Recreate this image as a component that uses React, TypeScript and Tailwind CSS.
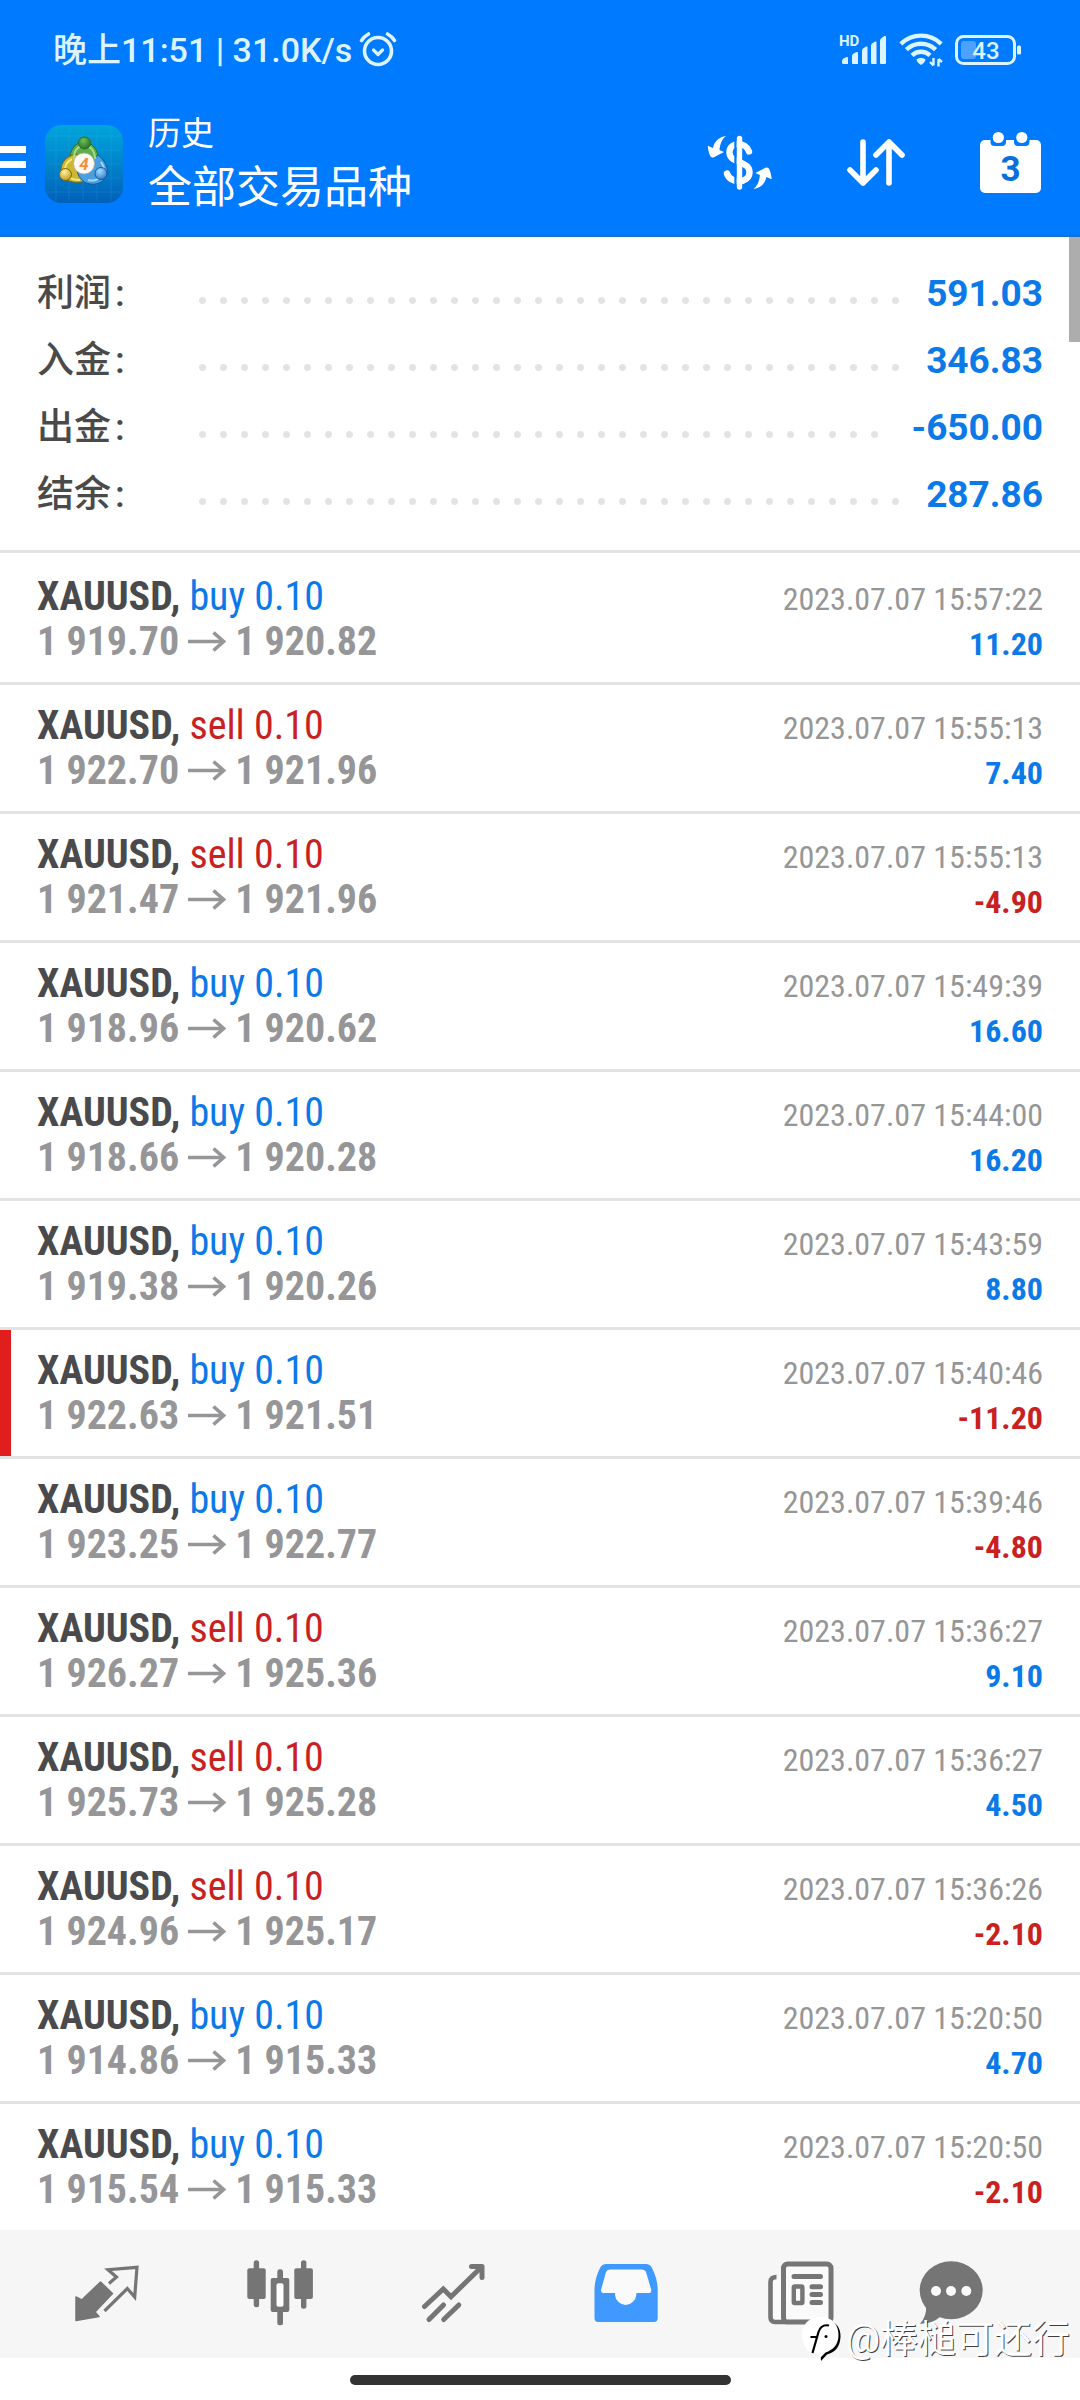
import type { ReactNode } from "react";

type Deal = {
  side: "buy" | "sell";
  open: string;
  close: string;
  time: string;
  profit: string;
  flagged?: boolean;
};

const summary = [
  { label: "利润", value: "591.03" },
  { label: "入金", value: "346.83" },
  { label: "出金", value: "-650.00" },
  { label: "结余", value: "287.86" },
];

const deals: Deal[] = [
  { side: "buy", open: "1 919.70", close: "1 920.82", time: "2023.07.07 15:57:22", profit: "11.20" },
  { side: "sell", open: "1 922.70", close: "1 921.96", time: "2023.07.07 15:55:13", profit: "7.40" },
  { side: "sell", open: "1 921.47", close: "1 921.96", time: "2023.07.07 15:55:13", profit: "-4.90" },
  { side: "buy", open: "1 918.96", close: "1 920.62", time: "2023.07.07 15:49:39", profit: "16.60" },
  { side: "buy", open: "1 918.66", close: "1 920.28", time: "2023.07.07 15:44:00", profit: "16.20" },
  { side: "buy", open: "1 919.38", close: "1 920.26", time: "2023.07.07 15:43:59", profit: "8.80" },
  { side: "buy", open: "1 922.63", close: "1 921.51", time: "2023.07.07 15:40:46", profit: "-11.20", flagged: true },
  { side: "buy", open: "1 923.25", close: "1 922.77", time: "2023.07.07 15:39:46", profit: "-4.80" },
  { side: "sell", open: "1 926.27", close: "1 925.36", time: "2023.07.07 15:36:27", profit: "9.10" },
  { side: "sell", open: "1 925.73", close: "1 925.28", time: "2023.07.07 15:36:27", profit: "4.50" },
  { side: "sell", open: "1 924.96", close: "1 925.17", time: "2023.07.07 15:36:26", profit: "-2.10" },
  { side: "buy", open: "1 914.86", close: "1 915.33", time: "2023.07.07 15:20:50", profit: "4.70" },
  { side: "buy", open: "1 915.54", close: "1 915.33", time: "2023.07.07 15:20:50", profit: "-2.10" },
];

function AlarmIcon() {
  return (
    <svg width="40" height="38" viewBox="0 0 40 38" fill="none" stroke="currentColor" strokeLinecap="round" strokeLinejoin="round" aria-hidden="true">
      <circle cx="20" cy="20" r="13.5" strokeWidth="3.6" />
      <path d="M15.5 19 L20 23.5 L24.5 19" strokeWidth="3.2" />
      <path d="M3.5 9.5 Q6 5.500 10.5 3" strokeWidth="3.6" />
      <path d="M36.5 9.5 Q34 5.500 29.5 3" strokeWidth="3.6" />
    </svg>
  );
}

function SignalIcon() {
  return (
    <svg width="50" height="42" viewBox="0 -4 50 42" fill="currentColor" aria-label="HD" role="img">
      <text x="1" y="13" className="font-[family-name:Roboto,sans-serif] text-[15px] font-bold">HD</text>
      <path d="M4 28 Q4 26.5 5.5 25.5 L8.5 24 Q10 23.5 10 25 V31 H5.5 Q4 31 4 29.5Z" />
      <path d="M14 23 Q14 21.5 15.5 20.5 L18.5 19 Q20 18.5 20 20 V31 H15 Q14 31 14 30Z" />
      <path d="M24 18 Q24 16.5 25 15.5 L28 13.5 Q29.5 13 29.5 14.5 V31 H25 Q24 31 24 30Z" />
      <path d="M33 13 Q33 11.5 34 10.5 L37 8.5 Q38.5 8 38.5 9.5 V31 H34 Q33 31 33 30Z" />
      <path d="M42 8 Q42 6 43.5 5 L46.5 3 Q48 2.5 48 4 V30 Q48 31 47 31 H43 Q42 31 42 30Z" />
    </svg>
  );
}

function WifiIcon() {
  return (
    <svg width="46" height="38" viewBox="0 0 46 38" fill="none" stroke="currentColor" aria-hidden="true">
      <g strokeWidth="4.4">
        <path d="M2.8 12.8 A29 29 0 0 1 43.2 12.8" />
        <path d="M8.4 18.6 A21 21 0 0 1 37.6 18.6" />
        <path d="M14 24.4 A13 13 0 0 1 32 24.4" />
      </g>
      <path d="M18.5 28.5 Q23 25 27.5 28.5 Q27 31.5 23 34 Q19 31.5 18.5 28.5Z" fill="currentColor" stroke="none" />
      <path d="M35.5 27 V34.5 M35.5 34.5 L32 31 M40.5 35.5 V28 M40.5 28 L44 31" strokeWidth="2.4" />
    </svg>
  );
}

function BatteryIcon() {
  return (
    <svg width="70" height="32" viewBox="0 0 70 32" fill="none" aria-label="43%" role="img">
      <rect x="2.5" y="2.5" width="58" height="27" rx="7" stroke="currentColor" strokeWidth="3" />
      <rect x="7" y="7" width="15" height="18" rx="3" fill="#4da2ff" />
      <rect x="63" y="11.5" width="4" height="9" rx="1.5" fill="currentColor" />
      <text x="32" y="24.5" textAnchor="middle" fill="currentColor" className="font-[family-name:Roboto,sans-serif] text-[24px] font-medium">43</text>
    </svg>
  );
}

function AppLogo() {
  return (
    <svg width="78" height="78" viewBox="0 0 78 78" aria-hidden="true" className="shrink-0">
      <defs>
        <linearGradient id="tile" x1="0" y1="0" x2="0" y2="1">
          <stop offset="0" stopColor="#00a5dc" />
          <stop offset="0.5" stopColor="#0084cc" />
          <stop offset="1" stopColor="#0060b8" />
        </linearGradient>
        <radialGradient id="green" cx="0.4" cy="0.3" r="0.8">
          <stop offset="0" stopColor="#6fc052" />
          <stop offset="1" stopColor="#1f6a24" />
        </radialGradient>
        <radialGradient id="yellow" cx="0.4" cy="0.3" r="0.8">
          <stop offset="0" stopColor="#fff3a0" />
          <stop offset="1" stopColor="#b98f10" />
        </radialGradient>
        <radialGradient id="blue" cx="0.4" cy="0.3" r="0.8">
          <stop offset="0" stopColor="#a8dcff" />
          <stop offset="1" stopColor="#1c74c4" />
        </radialGradient>
      </defs>
      <rect width="78" height="78" rx="16" fill="url(#tile)" />
      <path d="M11 2V76M24 2V76M38 2V76M52 2V76M66 2V76M2 11H76M2 25H76M2 39H76M2 53H76M2 67H76" stroke="#5cc8f0" strokeWidth="0.8" opacity="0.18" />
      <path d="M25 38 C22 10 56 10 53 38Z" fill="#5fae4c" stroke="#2b6e2a" />
      <path d="M32 29 C9 32 10 64 41 56Z" fill="#cdb830" stroke="#7d6a12" />
      <path d="M53 30 C73 46 57 66 39 57 Q33 52 32 46Z" fill="#4a9fe0" stroke="#16599a" />
      <path d="M29 34 C28 16 50 16 50 34" fill="none" stroke="#a6dc88" strokeWidth="2" />
      <path d="M27 34 C15 40 19 56 35 55" fill="none" stroke="#f4e67a" strokeWidth="2" />
      <path d="M56 37 C63 46 55 58 43 55" fill="none" stroke="#a4d8fa" strokeWidth="2" />
      <circle cx="39.5" cy="18" r="6" fill="url(#green)" stroke="#2b6e2a" />
      <circle cx="20.5" cy="49.5" r="6" fill="url(#yellow)" stroke="#7d6a12" />
      <circle cx="56" cy="48.500" r="6" fill="url(#blue)" stroke="#16599a" />
      <circle cx="39" cy="38.5" r="10.5" fill="#fdfaf5" stroke="#b9b09a" strokeWidth="0.8" />
      <text x="39" y="44.5" textAnchor="middle" fill="#f0903a" className="font-[family-name:Roboto,sans-serif] text-[17px] font-bold italic">4</text>
    </svg>
  );
}

function CurrencyIcon() {
  return (
    <svg width="70" height="58" viewBox="0 0 70 58" fill="none" aria-hidden="true">
      <path d="M44 17.5 C41 8 24.5 7 24.5 18.5 C24.5 30 44.5 26.5 44.5 38 C44.5 50 25 50 22 39.5" stroke="white" strokeWidth="6.4" strokeLinecap="round" />
      <path d="M30.5 2 V56" stroke="#007aff" strokeWidth="2.4" />
      <path d="M34.5 4.5 V53" stroke="white" strokeWidth="5.4" strokeLinecap="round" />
      <g fill="white">
        <path d="M21 2 C14 3 9.5 7 8 14 L2.7 11.7 Q3.5 19 5.5 22.5 Q7 24 9 23.3 L19 18 L14.5 16 C15 10 17 5 21 2Z" />
        <path transform="rotate(180 34.7 28.5)" d="M21 2 C14 3 9.5 7 8 14 L2.7 11.7 Q3.5 19 5.5 22.5 Q7 24 9 23.3 L19 18 L14.5 16 C15 10 17 5 21 2Z" />
      </g>
    </svg>
  );
}

function SortIcon() {
  return (
    <svg width="62" height="51" viewBox="0 0 62 51" fill="none" stroke="white" strokeWidth="5.6" strokeLinecap="round" strokeLinejoin="round" aria-hidden="true">
      <path d="M17 5 V46 M4 33 L17 46 L30 33" />
      <path d="M43 46 V5 M30 18 L43 5 L56 18" />
    </svg>
  );
}

function CalendarIcon() {
  return (
    <svg width="63" height="63" viewBox="0 0 63 63" aria-hidden="true">
      <rect x="1" y="9" width="61" height="53" rx="5" fill="white" />
      <path d="M11.5 6 V11 Q11.5 15 15.5 15 H23 Q27 15 27 11 V6Z M35 6 V11 Q35 15 39 15 H46.5 Q50.5 15 50.5 11 V6Z" fill="#007aff" />
      <circle cx="19.3" cy="6.5" r="5.6" fill="white" />
      <circle cx="42.8" cy="6.5" r="5.6" fill="white" />
      <text x="31.5" y="50" textAnchor="middle" fill="#0a6fdc" className="font-[family-name:Roboto,sans-serif] text-[35px] font-bold">3</text>
    </svg>
  );
}

function PriceArrow() {
  return (
    <svg width="38" height="21" viewBox="0 0 38 21" fill="none" stroke="currentColor" strokeWidth="3.6" aria-hidden="true" className="inline-block">
      <path d="M0 10.5 H35" />
      <path d="M25.5 1.5 L35.5 10.5 L25.5 19.5" />
    </svg>
  );
}

function TradeIcon() {
  return (
    <svg width="64" height="66" viewBox="0 0 64 66" fill="none" aria-hidden="true">
      <path d="M25.5 22 L37.5 33.5 L20 52 L24 56.5 L1 60.5 L1 37 L6.7 40Z" fill="currentColor" stroke="currentColor" strokeWidth="1.5" strokeLinejoin="round" />
      <path d="M34 23.5 L41.5 17 L33 9.7 L62 7.3 L59.7 37 L52.3 28.5 L29.5 51" stroke="currentColor" strokeWidth="3.2" />
    </svg>
  );
}

function CandlesIcon() {
  return (
    <svg width="68" height="68" viewBox="0 0 68 68" fill="currentColor" aria-hidden="true">
      <rect x="1.3" y="9.3" width="18.4" height="30.7" rx="2" />
      <rect x="7.7" y="1.3" width="5.4" height="47" rx="2.5" />
      <rect x="24.7" y="19" width="18.6" height="34" rx="2" />
      <rect x="31.3" y="10.3" width="5.7" height="56" rx="2.5" />
      <rect x="30.5" y="24.3" width="7" height="23.4" rx="2" fill="white" />
      <rect x="48.3" y="9.3" width="18.6" height="30.7" rx="2" />
      <rect x="55" y="1.3" width="5.4" height="48.5" rx="2.5" />
    </svg>
  );
}

function TrendIcon() {
  return (
    <svg width="64" height="62" viewBox="0 0 64 62" fill="none" stroke="currentColor" strokeWidth="5" strokeLinecap="round" aria-hidden="true">
      <path d="M3.5 44.5 L22.3 27 L30 34.7 L59 6.5" strokeLinejoin="miter" />
      <path d="M50.5 4.5 H61 V15.5" strokeLinejoin="round" />
      <path d="M8 57.5 L22.5 43 M22.7 57.5 L37.8 43" />
    </svg>
  );
}

function InboxIcon() {
  return (
    <svg width="64" height="60" viewBox="0 0 64 60" aria-hidden="true">
      <path d="M12.3 1 H52 Q56 1 58 5 Q63.7 16 63.7 27 V55 Q63.7 59 60 59 H4 Q0.5 59 0.5 55 V27 Q0.5 16 6 5 Q8 1 12.3 1Z" fill="#4099ff" />
      <path d="M16 6.5 H48 Q51 6.5 52 9 L57.3 27 Q57.5 30 55 30 H42.3 V32 A10.7 11 0 0 1 21 32 V30 H9.5 Q7 30 7 27 L12 9 Q13 6.5 16 6.5Z" fill="#fafafa" />
    </svg>
  );
}

function NewsIcon() {
  return (
    <svg width="72" height="66" viewBox="-4 0 72 66" fill="none" stroke="currentColor" aria-hidden="true">
      <path d="M9.5 17 Q3.5 17 3.5 22 V57 Q3.5 62 8 62 H20 V17Z" fill="#fafafa" stroke="none" />
      <path d="M9.5 17 Q3.5 17 3.5 22 V57 Q3.5 62 8 62 H20" strokeWidth="4.6" />
      <rect x="16.5" y="4" width="47.5" height="58" rx="4" fill="#fafafa" strokeWidth="5" />
      <path d="M27 16.5 H53.5 M45 26.8 H53.5 M45 34.5 H53.5 M45 42.5 H53.5" strokeWidth="5" strokeLinecap="round" />
      <rect x="26.8" y="26.5" width="8.6" height="16.5" rx="1" strokeWidth="4.4" />
    </svg>
  );
}

function ChatIcon() {
  return (
    <svg width="66" height="66" viewBox="0 0 66 66" fill="currentColor" aria-hidden="true">
      <ellipse cx="33.2" cy="30.3" rx="31.5" ry="29" />
      <path d="M8 46 Q9 56 2 63.7 Q14 64 22 57Z" />
      <g fill="#fafafa">
        <circle cx="18" cy="31" r="5" />
        <circle cx="33" cy="31" r="5" />
        <circle cx="48.3" cy="31" r="5" />
      </g>
    </svg>
  );
}

function Watermark() {
  return (
    <div className="absolute right-[10px] top-[85px] z-10 flex items-center gap-[3px]">
      <svg width="42" height="48" viewBox="0 0 42 48" aria-hidden="true" className="shrink-0">
        <path d="M25 5 C35 6 40 13 39.500 22 C39 32 34 37.500 26 39.500 L20 46 L19.500 39 Z" fill="black" />
        <path d="M19 2 C32 2 37.500 10 37.500 20 C37.500 30 32 35 24.500 37.500 L19 43 L18.500 38.500 L9 37.500 C2 31 0.500 24 1 17 C3 7 10 2 19 2Z" fill="white" />
        <path d="M28 10.500 Q20 9 17.500 17 L11.500 38 M9.500 22 H17" fill="none" stroke="black" strokeWidth="2.200" />
        <circle cx="25" cy="21.500" r="1.500" fill="black" />
      </svg>
      <span className="whitespace-nowrap text-[38px] leading-[46px] text-white [text-shadow:1px_1px_0_rgba(0,0,0,0.75)]">@棒槌可还行</span>
    </div>
  );
}

function DealRow({ deal, last }: { deal: Deal; last: boolean }) {
  const sideColor = deal.side === "buy" ? "text-[#0b79e8]" : "text-[#c9211f]";
  const profitColor = deal.profit.startsWith("-") ? "text-[#c9211f]" : "text-[#0b79e8]";
  return (
    <li
      className={
        "relative px-[37px] py-[18px] font-[family-name:'Roboto_Condensed',Roboto,sans-serif] " +
        (last ? "" : "border-b-[3px] border-[#e3e3e5]")
      }
    >
      {deal.flagged && <span className="absolute inset-y-0 left-0 w-[11px] bg-[#e01e1e]" />}
      <div className="flex h-[45px] items-baseline justify-between leading-[45px]">
        <span className="text-[40px]">
          <strong className="font-bold text-[#4a4a4d]">XAUUSD,</strong> <span className={sideColor}>{deal.side} 0.10</span>
        </span>
        <time className="text-[32px] text-[#969696]">{deal.time}</time>
      </div>
      <div className="flex h-[45px] items-baseline justify-between font-bold leading-[45px]">
        <span className="flex items-center gap-[9px] text-[40px] text-[#969698]">
          {deal.open}
          <PriceArrow />
          {deal.close}
        </span>
        <span className={"text-[32px] " + profitColor}>{deal.profit}</span>
      </div>
    </li>
  );
}

function NavButton({ label, active, children }: { label: string; active?: boolean; children: ReactNode }) {
  return (
    <button type="button" aria-label={label} aria-current={active ? "page" : undefined} className="flex h-32 items-center justify-center pb-[3px] text-[#757575]">
      {children}
    </button>
  );
}

export default function App() {
  return (
    <div className="flex min-h-screen flex-col bg-white font-[family-name:Roboto,'Noto_Sans_CJK_SC',sans-serif]">
      <header className="border-b-2 border-[#1a70c4] bg-[#007aff] pb-[7px] text-white">
        <div className="flex h-[100px] items-center justify-between pl-[53px] pr-14 text-[#dcf4ff]">
          <div className="flex items-center gap-[6px]">
            <span className="text-[34px] font-medium leading-none">晚上11:51 | 31.0K/s</span>
            <AlarmIcon />
          </div>
          <div className="flex items-center gap-[10px]">
            <SignalIcon />
            <WifiIcon />
            <BatteryIcon />
          </div>
        </div>
        <div className="flex h-32 items-center pr-[38px]">
          <button type="button" aria-label="菜单" className="flex w-[45px] flex-col gap-2 pr-[19px]">
            <span className="h-[7px] bg-white" />
            <span className="h-[7px] bg-white" />
            <span className="h-[7px] bg-white" />
          </button>
          <AppLogo />
          <div className="ml-[25px] flex-1 pt-[2px]">
            <h1 className="text-[33px] leading-[46px]">历史</h1>
            <p className="text-[44px] leading-[62px]">全部交易品种</p>
          </div>
          <div className="flex items-center gap-[71px] pb-[3px]">
            <button type="button" aria-label="品种"><CurrencyIcon /></button>
            <button type="button" aria-label="排序"><SortIcon /></button>
            <button type="button" aria-label="日期"><CalendarIcon /></button>
          </div>
        </div>
      </header>

      <main className="relative flex-1">
        <span className="absolute right-0 top-0 h-[105px] w-[11px] bg-[#adadad]" />
        <dl className="border-b-[3px] border-[#e3e3e5] px-[37px] pb-[22px] pt-[23px]">
          {summary.map((item) => (
            <div key={item.label} className="flex h-[67px] items-center">
              <dt className="flex w-[155px] gap-1 text-[37px] font-medium text-[#4a4a4a]">
                <span>{item.label}</span>
                <span>:</span>
              </dt>
              <dd className="flex flex-1 items-center gap-[23px]">
                <span className="mt-[14px] h-[7px] flex-1 bg-[radial-gradient(circle,#e3e3e3_3px,transparent_4px)] bg-[length:21px_7px] bg-repeat-x" />
                <span className="text-[37px] font-bold text-[#0b79e8]">{item.value}</span>
              </dd>
            </div>
          ))}
        </dl>
        <ul className="pt-[3px]">
          {deals.map((deal, i) => (
            <DealRow key={i} deal={deal} last={i === deals.length - 1} />
          ))}
        </ul>
      </main>

      <footer className="relative">
        <nav className="grid grid-cols-[repeat(5,4fr)_3fr] bg-[#f6f6f6] pl-5 pr-16">
          <NavButton label="行情"><TradeIcon /></NavButton>
          <NavButton label="图表"><CandlesIcon /></NavButton>
          <NavButton label="交易"><TrendIcon /></NavButton>
          <NavButton label="历史" active><InboxIcon /></NavButton>
          <NavButton label="新闻"><NewsIcon /></NavButton>
          <NavButton label="消息"><ChatIcon /></NavButton>
        </nav>
        <div className="flex h-[43px] items-center justify-center">
          <span className="h-[10px] w-[381px] rounded-full bg-[#333333]" />
        </div>
        <Watermark />
      </footer>
    </div>
  );
}
